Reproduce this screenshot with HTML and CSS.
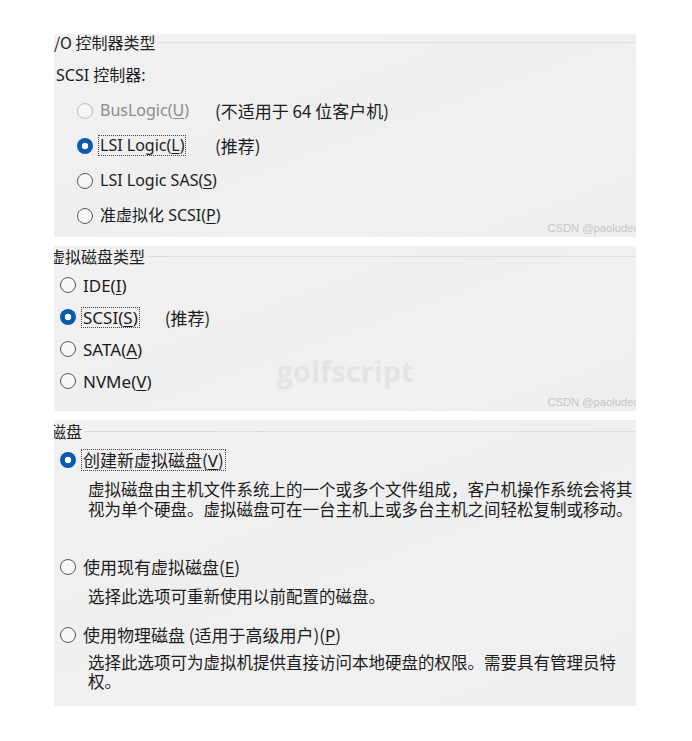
FILE: index.html
```html
<!DOCTYPE html>
<html lang="zh-CN">
<head>
<meta charset="utf-8">
<title>新建虚拟机向导</title>
<link rel="stylesheet" href="styles.css">
</head>
<body>
<div class="stack">
  <section class="panel p1">
    <div class="group-head"><span class="cap">/O 控制器类型</span><span class="rule"></span></div>
    <div class="sub">SCSI 控制器:</div>
    <div class="opts opts1">
      <div class="opt disabled"><span class="cell"><span class="radio"></span><span class="lbl">BusLogic(<u>U</u>)</span></span><span class="note">(不适用于 64 位客户机)</span></div>
      <div class="opt"><span class="cell"><span class="radio on"></span><span class="lbl focus">LSI Logic(<u>L</u>)</span></span><span class="note">(推荐)</span></div>
      <div class="opt"><span class="cell"><span class="radio"></span><span class="lbl">LSI Logic SAS(<u>S</u>)</span></span></div>
      <div class="opt"><span class="cell"><span class="radio"></span><span class="lbl">准虚拟化 SCSI(<u>P</u>)</span></span></div>
    </div>
    <span class="wm">CSDN @paoludec</span>
  </section>

  <section class="panel p2">
    <div class="group-head"><span class="cap cut">虚拟磁盘类型</span><span class="rule"></span></div>
    <div class="opts opts2">
      <div class="opt"><span class="radio"></span><span class="lbl">IDE(<u>I</u>)</span></div>
      <div class="opt"><span class="radio on"></span><span class="lbl focus">SCSI(<u>S</u>)</span><span class="note">(推荐)</span></div>
      <div class="opt"><span class="radio"></span><span class="lbl">SATA(<u>A</u>)</span></div>
      <div class="opt"><span class="radio"></span><span class="lbl">NVMe(<u>V</u>)</span></div>
    </div>
    <span class="golf">golfscript</span>
    <span class="wm">CSDN @paoludec</span>
  </section>

  <section class="panel p3">
    <div class="group-head"><span class="cap cut2">磁盘</span><span class="rule"></span></div>
    <div class="disk-opt first">
      <div class="opt"><span class="radio on"></span><span class="lbl focus cjk">创建新虚拟磁盘(<u>V</u>)</span></div>
      <p class="desc">虚拟磁盘由主机文件系统上的一个或多个文件组成，客户机操作系统会将其<br>视为单个硬盘。虚拟磁盘可在一台主机上或多台主机之间轻松复制或移动。</p>
    </div>
    <div class="disk-opt second">
      <div class="opt"><span class="radio"></span><span class="lbl cjk">使用现有虚拟磁盘(<u>E</u>)</span></div>
      <p class="desc">选择此选项可重新使用以前配置的磁盘。</p>
    </div>
    <div class="disk-opt third">
      <div class="opt"><span class="radio"></span><span class="lbl cjk">使用物理磁盘 (适用于高级用户)(<u>P</u>)</span></div>
      <p class="desc">选择此选项可为虚拟机提供直接访问本地硬盘的权限。需要具有管理员特<br>权。</p>
    </div>
  </section>
</div>
</body>
</html>
```

FILE: styles.css
```css
html, body {
  margin: 0;
  padding: 0;
  background: #ffffff;
}

body {
  font-family: "Noto Sans", "Noto Sans CJK SC", sans-serif;
  color: #1c1c1c;
}

.stack {
  margin: 34px 0 0 54px;
  width: 582px;
  display: flex;
  flex-direction: column;
  gap: 9px;
}

.panel {
  position: relative;
  overflow: hidden;
  background: linear-gradient(160deg, #f2f2f2 0%, #efefef 45%, #f1f1f1 70%, #eeeeee 100%);
  box-sizing: border-box;
}

.p1 { height: 203px; }
.p2 { height: 165px; }
.p3 { height: 286px; }

.group-head {
  display: flex;
  align-items: center;
  height: 16px;
  font-family: "Noto Sans CJK SC", sans-serif;
  font-size: 16px;
  line-height: 16px;
  color: #222;
}

.cap { white-space: nowrap; padding-right: 2px; }
.cap.cut { margin-left: -5px; }
.cap.cut2 { margin-left: -4px; }

.rule {
  flex: 1;
  height: 1px;
  background: #dedede;
}

.p1 .group-head { margin-top: 0; }
.p2 .group-head { margin-top: 2px; }
.p3 .group-head { margin-top: 3px; }

.sub {
  margin-top: 16px;
  margin-left: 2px;
  font-size: 16px;
  line-height: 18px;
  height: 18px;
  white-space: nowrap;
}

.opts { display: flex; flex-direction: column; }
.opts1 { margin-top: 9px; padding-left: 23px; }
.opts2 { margin-top: 5px; padding-left: 6px; }

.opts1 .opt { height: 35px; font-size: 16px; }
.opts2 .opt { height: 32px; font-size: 17px; }

.opt {
  display: flex;
  align-items: center;
  white-space: nowrap;
}

.cell {
  display: flex;
  align-items: center;
  width: 138px;
  flex: none;
}

.radio {
  width: 16px;
  height: 16px;
  box-sizing: border-box;
  border: 1px solid #5a5a5a;
  border-radius: 50%;
  background: #f7f7f7;
  flex: none;
  margin-right: 5px;
}

.radio.on {
  border: none;
  background: radial-gradient(circle, #ffffff 0 3px, #0a5bb0 3.6px);
}

.disabled { color: #8c8c8c; }
.disabled .radio { border-color: #bdbdbd; background: #f5f5f5; }

.lbl {
  line-height: 19px;
  padding: 0 1px;
  border: 1px dotted transparent;
}

.lbl.focus { border-color: #444; }

.lbl u { text-underline-offset: 2px; }

.note {
  font-family: "Noto Sans CJK SC", sans-serif;
  font-size: 17px;
  color: #1c1c1c;
}

.opts2 .note { margin-left: 25px; }

.cjk { font-family: "Noto Sans CJK SC", sans-serif; }
.cjk u { font-family: "Noto Sans", sans-serif; }

.p3 .opt { height: 24px; padding-left: 6px; font-size: 17px; }

.disk-opt.first { margin-top: 9px; }
.disk-opt.second { margin-top: 36px; }
.disk-opt.third { margin-top: 16px; }

.desc {
  margin: 8px 0 0 34px;
  font-family: "Noto Sans CJK SC", serif;
  font-size: 16.5px;
  line-height: 19.5px;
  white-space: nowrap;
  color: #1c1c1c;
}

.third .desc { margin-top: 6px; }

.wm {
  position: absolute;
  right: -3px;
  bottom: 3px;
  font-family: "Liberation Sans", sans-serif;
  font-size: 11.2px;
  color: #c6c6c6;
  white-space: nowrap;
}

.golf {
  position: absolute;
  left: 223px;
  top: 106px;
  font-family: "Open Sans", sans-serif;
  font-weight: 700;
  font-size: 28px;
  color: #e4e4e4;
  letter-spacing: 0.5px;
}
```
